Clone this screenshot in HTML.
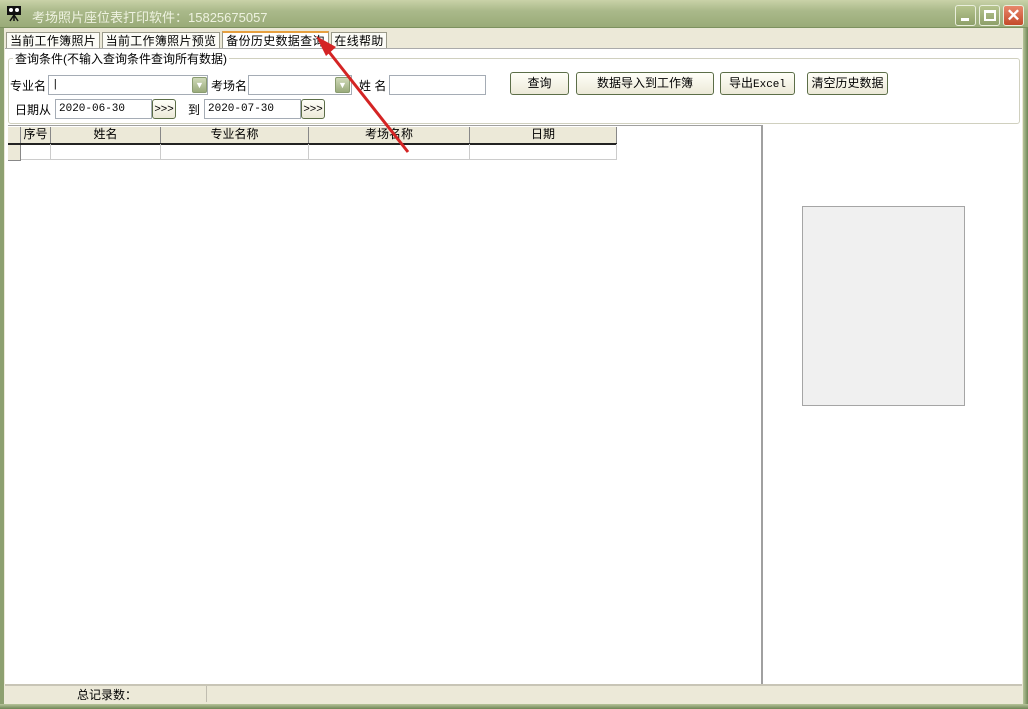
<!DOCTYPE html>
<html><head><meta charset="utf-8"><style>
*{margin:0;padding:0;box-sizing:border-box}
body{width:1028px;height:709px;overflow:hidden;background:#ece9d8;font-family:"Liberation Sans","Noto Sans CJK SC","WenQuanYi Zen Hei",sans-serif;font-size:12px;color:#000;position:relative}
.a{position:absolute}
.title{left:0;top:0;width:1028px;height:28px;background:linear-gradient(#c9d2a8,#aab98a 40%,#9aab78);border-bottom:1px solid #7d9160}
.title span{position:absolute;left:32px;top:7px;color:#eef2e0;font-size:13px}
.frame{left:0;top:28px;width:4px;height:681px;background:#8da070}
.frameR{right:0;top:28px;width:5px;height:681px;background:linear-gradient(90deg,#b7c49a,#6f8656)}
.frameB{left:0;bottom:0;width:1028px;height:5px;background:linear-gradient(#b7c49a,#6f8656)}
.wb{top:5px;width:21px;height:21px;border:1px solid #e9eedc;border-radius:3px;background:linear-gradient(#b6c48e,#8ea06a)}
.tab{top:32px;height:17px;background:#fbfbf6;border:1px solid #9a9a8a;border-bottom:none;font-size:12px;line-height:16px;text-align:center;white-space:nowrap;letter-spacing:0.3px}
.panel{left:5px;top:48px;width:1017px;height:636px;background:#fff;border-top:1px solid #aaa}
.box{position:absolute;height:20px;border:1px solid #a5acb5;background:#fff;font-size:11px;padding-left:3px;line-height:18px;font-family:"Liberation Mono",monospace}
.btn{position:absolute;height:23px;border:1px solid #5c6e48;border-radius:3px;background:linear-gradient(#fffff8,#ece9d8);font-size:12px;text-align:center;line-height:21px}
.dd{position:absolute;width:15px;height:16px;background:linear-gradient(#cfd9b8,#9aab7c);border:1px solid #8a9c70;border-radius:2px;color:#fff;font-size:9px;text-align:center;line-height:14px}
.th{position:absolute;top:127px;height:16px;background:#ece9d8;border-right:1px solid #888;text-align:center;line-height:15px;font-size:12px}
.cell{position:absolute;top:144px;height:16px;border-right:1px solid #ccc;border-bottom:1px solid #ccc}
.lb{position:absolute;font-size:12px}
</style></head><body>
<div class="a title"><svg class="a" style="left:6px;top:4px" width="18" height="18" viewBox="0 0 18 18"><rect x="1" y="2" width="14" height="9" fill="#111"/><circle cx="5" cy="6" r="2" fill="#fff"/><circle cx="11" cy="6" r="2" fill="#fff"/><path d="M8 11 L4 17 M8 11 L12 17 M8 11 V17" stroke="#111" stroke-width="1.5"/></svg><span>考场照片座位表打印软件：15825675057</span></div>
<div class="a wb" style="left:955px"><div class="a" style="left:5px;top:12px;width:8px;height:3px;background:#fff"></div></div>
<div class="a wb" style="left:979px"><div class="a" style="left:4px;top:4px;width:12px;height:11px;border:2px solid #fff;border-top-width:3px"></div></div>
<div class="a wb" style="left:1003px;background:linear-gradient(#e8876b,#c44a2a);color:#fff;font-size:17px;text-align:center;line-height:19px;font-weight:bold">✕</div>
<div class="a frame"></div><div class="a frameR"></div><div class="a frameB"></div>
<div class="a tab" style="left:6px;width:94px">当前工作簿照片</div>
<div class="a tab" style="left:102px;width:118px">当前工作簿照片预览</div>
<div class="a tab" style="left:222px;width:107px;top:31px;height:18px;border-top:2px solid #e6a040;background:#fff">备份历史数据查询</div>
<div class="a tab" style="left:331px;width:56px">在线帮助</div>
<div class="a panel"></div>
<div class="a" style="left:8px;top:58px;width:1012px;height:66px;border:1px solid #d0d0bf;border-radius:3px"></div>
<div class="a" style="left:13px;top:50px;background:#fff;padding:0 2px;font-size:12px">查询条件(不输入查询条件查询所有数据)</div>
<div class="lb" style="left:10px;top:77px">专业名</div>
<div class="box" style="left:48px;top:75px;width:160px">|</div><div class="dd" style="left:192px;top:77px">▼</div>
<div class="lb" style="left:211px;top:77px">考场名</div>
<div class="box" style="left:248px;top:75px;width:104px"></div><div class="dd" style="left:335px;top:77px">▼</div>
<div class="lb" style="left:359px;top:77px">姓 名</div>
<div class="box" style="left:389px;top:75px;width:97px"></div>
<div class="lb" style="left:15px;top:101px">日期从</div>
<div class="box" style="left:55px;top:99px;width:97px">2020-06-30</div>
<div class="btn" style="left:152px;top:99px;width:24px;height:20px;line-height:18px;font-size:11px">&gt;&gt;&gt;</div>
<div class="lb" style="left:188px;top:101px">到</div>
<div class="box" style="left:204px;top:99px;width:97px">2020-07-30</div>
<div class="btn" style="left:301px;top:99px;width:24px;height:20px;line-height:18px;font-size:11px">&gt;&gt;&gt;</div>
<div class="btn" style="left:510px;top:72px;width:59px">查询</div>
<div class="btn" style="left:576px;top:72px;width:138px">数据导入到工作簿</div>
<div class="btn" style="left:720px;top:72px;width:75px">导出<span style="font-family:'Liberation Mono';font-size:11px">Excel</span></div>
<div class="btn" style="left:807px;top:72px;width:81px">清空历史数据</div>
<div class="a" style="left:8px;top:125px;width:755px;height:559px;border-right:2px solid #a0a0a0;border-top:1px solid #a0a0a0"></div>
<div class="a" style="left:8px;top:127px;width:609px;height:18px;border-bottom:2px solid #222"></div>
<div class="th" style="left:8px;width:13px"></div>
<div class="th" style="left:21px;width:30px">序号</div>
<div class="th" style="left:51px;width:110px">姓名</div>
<div class="th" style="left:161px;width:148px">专业名称</div>
<div class="th" style="left:309px;width:161px">考场名称</div>
<div class="th" style="left:470px;width:147px">日期</div>
<div class="a" style="left:8px;top:145px;width:13px;height:16px;background:#ece9d8;border-right:1px solid #888;border-bottom:1px solid #888"></div>
<div class="cell" style="left:21px;width:30px"></div><div class="cell" style="left:51px;width:110px"></div><div class="cell" style="left:161px;width:148px"></div><div class="cell" style="left:309px;width:161px"></div><div class="cell" style="left:470px;width:147px"></div>
<div class="a" style="left:802px;top:206px;width:163px;height:200px;background:#f0f0f0;border:1px solid #a5a5a5"></div>
<div class="a" style="left:5px;top:684px;width:1017px;height:20px;background:#ece9d8;border-top:2px solid #c8c5b6"></div>
<div class="a" style="left:206px;top:686px;width:1px;height:16px;background:#c0bdb0"></div>
<div class="a" style="left:77px;top:686px;font-size:12px">总记录数：</div>
<svg class="a" style="left:0;top:0" width="1028" height="709"><path d="M322 43 L408 152" stroke="#d42424" stroke-width="3"/><path d="M316 36 L336 47 L326 56 Z" fill="#d42424"/></svg>
</body></html>
